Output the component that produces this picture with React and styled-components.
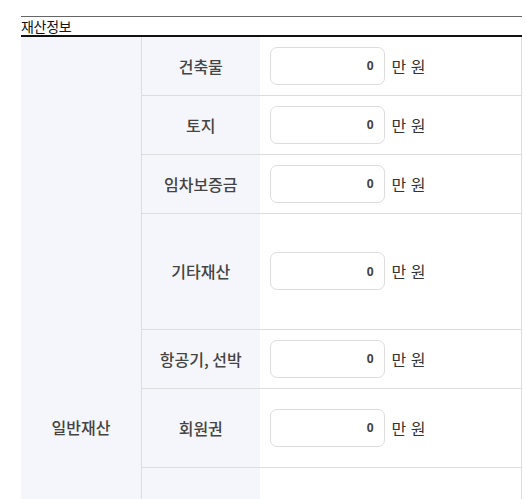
import React from 'react'
import styled, { createGlobalStyle } from 'styled-components'

const GlobalStyle = createGlobalStyle`
  body {
    margin: 0;
    background: #fff;
    font-family: "Noto Sans CJK KR", "Noto Sans", sans-serif;
  }
`

const Section = styled.section`
  width: 501px;
  margin: 16px 0 0 21px;
`

const Title = styled.h3`
  margin: 0;
  border-top: 1px solid #666;
  border-bottom: 2px solid #111;
  font-size: 14px;
  font-weight: 400;
  line-height: 18px;
  color: #111;
  letter-spacing: -0.3px;
`

const Table = styled.table`
  width: 100%;
  border-collapse: collapse;
  table-layout: fixed;
  border-right: 1px solid #ddd;
`

const GroupCell = styled.th`
  width: 120px;
  background: #f5f6fb;
  border-right: 1px solid #ddd;
  font-size: 16px;
  font-weight: 500;
  line-height: 22px;
  color: #444;
  vertical-align: top;
  padding: 379px 0 0;
`

const LabelCell = styled.th`
  width: 118px;
  height: ${p => p.$h}px;
  background: #f5f6fb;
  border-bottom: 1px solid #ddd;
  font-size: 16px;
  font-weight: 500;
  color: #444;
  padding: 0;
  box-sizing: border-box;
`

const ValueCell = styled.td`
  border-bottom: 1px solid #ddd;
  padding: 0 0 0 10px;
`

const Field = styled.div`
  display: flex;
  align-items: center;
  gap: 7px;
`

const Input = styled.input`
  width: 115px;
  height: 38px;
  box-sizing: border-box;
  border: 1px solid #ddd;
  border-radius: 7px;
  text-align: right;
  padding: 0 10px;
  font-family: "Noto Sans", sans-serif;
  font-size: 12px;
  font-weight: 700;
  color: #444;
  outline: none;
`

const Unit = styled.span`
  font-size: 16px;
  color: #333;
  word-spacing: 1px;
`

const rows = [
  { label: '건축물', h: 58 },
  { label: '토지', h: 59 },
  { label: '임차보증금', h: 59 },
  { label: '기타재산', h: 116 },
  { label: '항공기, 선박', h: 59 },
  { label: '회원권', h: 79 },
]

export default function App() {
  return (
    <>
      <GlobalStyle />
      <Section>
        <Title>재산정보</Title>
        <Table>
          <tbody>
            {rows.map((r, i) => (
              <tr key={i}>
                {i === 0 && <GroupCell rowSpan={7}>일반재산</GroupCell>}
                <LabelCell $h={r.h}>{r.label}</LabelCell>
                <ValueCell>
                  <Field>
                    <Input defaultValue="0" />
                    <Unit>만 원</Unit>
                  </Field>
                </ValueCell>
              </tr>
            ))}
            <tr>
              <LabelCell $h={58}></LabelCell>
              <ValueCell></ValueCell>
            </tr>
          </tbody>
        </Table>
      </Section>
    </>
  )
}
